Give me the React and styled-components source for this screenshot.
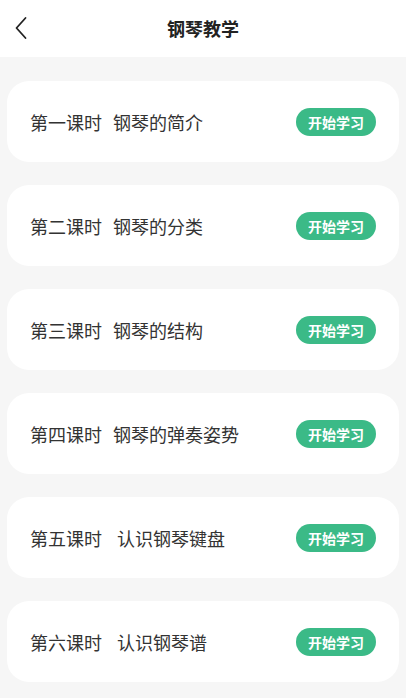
import React from 'react'
import styled, { createGlobalStyle } from 'styled-components'

const GlobalStyle = createGlobalStyle`
  html, body {
    margin: 0;
    padding: 0;
    background: #f6f6f6;
    font-family: "Noto Sans CJK SC", "Noto Sans", sans-serif;
  }
`

// the last two titles sit a little further from the lesson number
const lessons = [
    { no: '第一课时', title: '钢琴的简介', gap: 11 },
    { no: '第二课时', title: '钢琴的分类', gap: 11 },
    { no: '第三课时', title: '钢琴的结构', gap: 11 },
    { no: '第四课时', title: '钢琴的弹奏姿势', gap: 11 },
    { no: '第五课时', title: '认识钢琴键盘', gap: 15 },
    { no: '第六课时', title: '认识钢琴谱', gap: 15 },
]

function App() {
    return (
        <Page>
            <GlobalStyle />
            <Header>
                <BackButton aria-label='back'>
                    <svg width='14' height='24' viewBox='0 0 14 24' fill='none'>
                        <path d='M11.5 2 L2.5 12 L11.5 22' stroke='#222' strokeWidth='1.8' strokeLinecap='round' strokeLinejoin='round' />
                    </svg>
                </BackButton>
                <Title>钢琴教学</Title>
            </Header>
            <List>
                {lessons.map((l) => (
                    <Card key={l.no}>
                        <LessonName>
                            {l.no}
                            <LessonTitle $gap={l.gap}>{l.title}</LessonTitle>
                        </LessonName>
                        <StartButton>开始学习</StartButton>
                    </Card>
                ))}
            </List>
        </Page>
    )
}

const Page = styled.div`
  min-height: 698px;
  background: #f6f6f6;
`

const Header = styled.div`
  position: relative;
  height: 57px;
  background: #fff;
  display: flex;
  align-items: center;
  justify-content: center;
`

const BackButton = styled.div`
  position: absolute;
  left: 14px;
  top: 16px;
  display: flex;
`

const Title = styled.div`
  font-size: 18px;
  font-weight: 700;
  color: #222;
  margin-top: -1px;
`

const List = styled.div`
  display: flex;
  flex-direction: column;
  gap: 23px;
  padding: 24px 7px 0;
`

const Card = styled.div`
  height: 81px;
  background: #fff;
  border-radius: 22px;
  display: flex;
  align-items: center;
  justify-content: space-between;
  padding: 0 23px 0 23px;
`

const LessonName = styled.div`
  display: flex;
  font-size: 18px;
  color: #333;
`

const LessonTitle = styled.span`
  margin-left: ${(p) => p.$gap}px;
`

const StartButton = styled.div`
  width: 80px;
  height: 28px;
  border-radius: 14px;
  background: #3bba87;
  color: #fff;
  font-size: 14px;
  font-weight: 700;
  display: flex;
  align-items: center;
  justify-content: center;
`

export default App
